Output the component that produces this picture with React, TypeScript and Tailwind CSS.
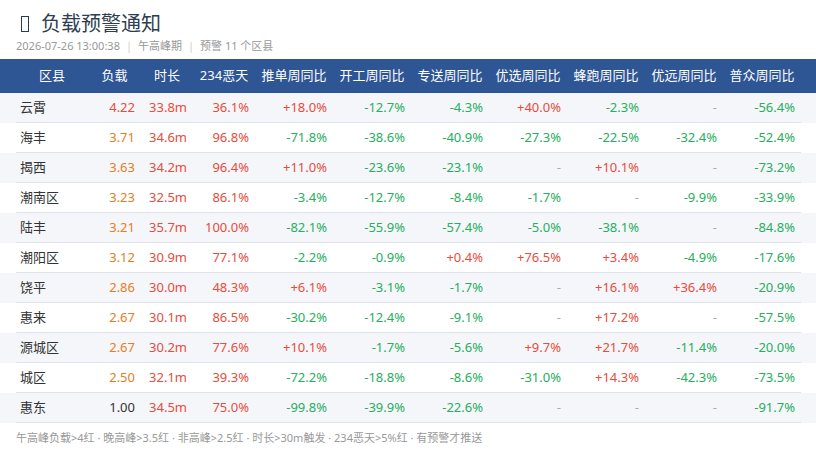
const rows: string[][] = [
  ['云霄', '4.22', '33.8m', '36.1%', '+18.0%', '-12.7%', '-4.3%', '+40.0%', '-2.3%', '-', '-56.4%'],
  ['海丰', '3.71', '34.6m', '96.8%', '-71.8%', '-38.6%', '-40.9%', '-27.3%', '-22.5%', '-32.4%', '-52.4%'],
  ['揭西', '3.63', '34.2m', '96.4%', '+11.0%', '-23.6%', '-23.1%', '-', '+10.1%', '-', '-73.2%'],
  ['潮南区', '3.23', '32.5m', '86.1%', '-3.4%', '-12.7%', '-8.4%', '-1.7%', '-', '-9.9%', '-33.9%'],
  ['陆丰', '3.21', '35.7m', '100.0%', '-82.1%', '-55.9%', '-57.4%', '-5.0%', '-38.1%', '-', '-84.8%'],
  ['潮阳区', '3.12', '30.9m', '77.1%', '-2.2%', '-0.9%', '+0.4%', '+76.5%', '+3.4%', '-4.9%', '-17.6%'],
  ['饶平', '2.86', '30.0m', '48.3%', '+6.1%', '-3.1%', '-1.7%', '-', '+16.1%', '+36.4%', '-20.9%'],
  ['惠来', '2.67', '30.1m', '86.5%', '-30.2%', '-12.4%', '-9.1%', '-', '+17.2%', '-', '-57.5%'],
  ['源城区', '2.67', '30.2m', '77.6%', '+10.1%', '-1.7%', '-5.6%', '+9.7%', '+21.7%', '-11.4%', '-20.0%'],
  ['城区', '2.50', '32.1m', '39.3%', '-72.2%', '-18.8%', '-8.6%', '-31.0%', '+14.3%', '-42.3%', '-73.5%'],
  ['惠东', '1.00', '34.5m', '75.0%', '-99.8%', '-39.9%', '-22.6%', '-', '-', '-', '-91.7%'],
]

const headers = ['区县', '负载', '时长', '234恶天', '推单周同比', '开工周同比', '专送周同比', '优选周同比', '蜂跑周同比', '优远周同比', '普众周同比']

const cols = 'grid grid-cols-[72px_53px_52px_62px_78px_78px_78px_78px_78px_78px_78px]'

function loadColor(v: string) {
  const n = parseFloat(v)
  if (n > 4) return 'text-[#e74c3c]'
  if (n > 2.4) return 'text-[#e67e22]'
  return 'text-[#333333]'
}

function pctColor(v: string) {
  if (v === '-') return 'text-[#aaaaaa]'
  if (v.startsWith('+')) return 'text-[#e74c3c]'
  return 'text-[#27ae60]'
}

export default function App() {
  return (
    <div
      className="w-[816px] h-[470px] bg-white overflow-hidden"
      style={{ fontFamily: '"Noto Sans", "Noto Sans CJK SC", sans-serif' }}
    >
      {/* Title */}
      <div className="px-4 pt-[10px]">
        <div className="flex items-center gap-[12px] pl-[5px] text-[20px] leading-[28px] text-[#2c3e50]">
          <span className="inline-block w-[8px] h-[16px] border border-[#2c3e50]" />
          <span>负载预警通知</span>
        </div>
        <div className="text-[11px] leading-[16px] text-[#999999]">
          2026-07-26 13:00:38<span className="mx-[6px] text-[#cccccc]">|</span>午高峰期
          <span className="mx-[6px] text-[#cccccc]">|</span>预警 11 个区县
        </div>
      </div>

      {/* Table header */}
      <div className="mt-[5px] bg-[#2e5594] h-[34px]">
        <div className={`${cols} mx-4 h-full items-center text-[13px] text-white`}>
          {headers.map((h) => (
            <div key={h} className="text-center">
              {h}
            </div>
          ))}
        </div>
      </div>

      {/* Rows */}
      {rows.map((r, i) => (
        <div key={r[0]} className={i % 2 === 0 ? 'bg-[#f5f6fa]' : 'bg-white'}>
          <div className={`${cols} ml-4 mr-[15px] h-[30px] items-center border-b border-[#dfe2ea] text-[13px]`}>
            <div className="pl-[4px] text-[#333333]">{r[0]}</div>
            <div className={`text-right pr-[6px] ${loadColor(r[1])}`}>{r[1]}</div>
            <div className="text-right pr-[6px] text-[#e74c3c]">{r[2]}</div>
            <div className="text-right pr-[6px] text-[#e74c3c]">{r[3]}</div>
            {r.slice(4).map((v, j) => (
              <div key={j} className={`text-right pr-[6px] ${pctColor(v)}`}>
                {v}
              </div>
            ))}
          </div>
        </div>
      ))}

      {/* Footer */}
      <div className="px-4 pt-[7px] text-[11px] leading-[16px] text-[#999999]">
        午高峰负载&gt;4红 · 晚高峰&gt;3.5红 · 非高峰&gt;2.5红 · 时长&gt;30m触发 · 234恶天&gt;5%红 · 有预警才推送
      </div>
    </div>
  )
}
